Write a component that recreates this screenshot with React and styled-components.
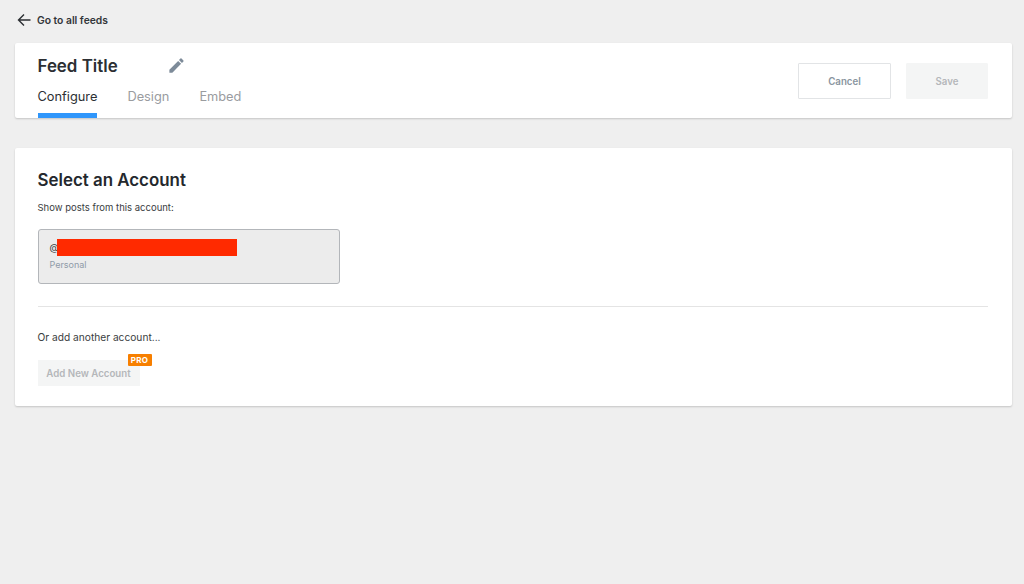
import React from "react";
import styled, { createGlobalStyle } from "styled-components";

const GlobalStyle = createGlobalStyle`
  html, body {
    margin: 0;
    padding: 0;
    background: #efefef;
    font-family: Inter, "Liberation Sans", sans-serif;
    color: #2c2f33;
  }
  * {
    box-sizing: border-box;
  }
`;

const Page = styled.div`
  width: 1024px;
  height: 584px;
  overflow: hidden;
  padding: 0 12px 0 15px;
`;

const BackLink = styled.a`
  display: flex;
  align-items: center;
  gap: 6px;
  height: 43px;
  padding: 0 0 3px 2px;
  font-size: 10.3px;
  font-weight: 600;
  color: #33363a;
  svg {
    display: block;
  }
`;

const Card = styled.section`
  background: #fff;
  border-radius: 2px;
  box-shadow: 0 1px 2px rgba(0, 0, 0, 0.18);
`;

const HeaderCard = styled(Card)`
  display: flex;
  justify-content: space-between;
  height: 75px;
  padding: 0 24px 0 22.5px;
`;

const TitleRow = styled.div`
  display: flex;
  align-items: center;
  height: 46px;
  svg {
    margin-top: -2px;
  }
`;

const FeedTitle = styled.h1`
  width: 129px;
  margin: 0;
  font-size: 16.9px;
  font-weight: 600;
  color: #2c2f33;
`;

const Tabs = styled.nav`
  display: flex;
  gap: 30px;
`;

const Tab = styled.a`
  height: 29px;
  font-size: 12.8px;
  line-height: 16px;
  color: ${(p) => (p.$active ? "#2c2f33" : "#9a9c9f")};
  border-bottom: 5px solid ${(p) => (p.$active ? "#2f96fb" : "transparent")};
`;

const Actions = styled.div`
  display: flex;
  gap: 15px;
  padding-top: 20px;
`;

const Button = styled.button`
  height: 36px;
  width: ${(p) => p.$width}px;
  padding: 0;
  font-family: inherit;
  font-size: 9.7px;
  font-weight: 600;
  border-radius: 1px;
  background: ${(p) => (p.$ghost ? "#fff" : "#f4f5f5")};
  border: 1px solid ${(p) => (p.$ghost ? "#e2e4e6" : "#f4f5f5")};
  color: ${(p) => (p.$ghost ? "#8a95a0" : "#b4b7ba")};
`;

const AccountCard = styled(Card)`
  height: 257.5px;
  margin-top: 30px;
  padding: 20.5px 24px 0 22.5px;
`;

const Heading = styled.h2`
  margin: 0;
  font-size: 16.9px;
  line-height: 22px;
  font-weight: 600;
  color: #24282d;
`;

const Hint = styled.p`
  margin: 11px 0 0;
  font-size: 9.5px;
  line-height: 12px;
  color: #3a3d41;
`;

const AccountBox = styled.div`
  width: 302px;
  height: 55px;
  margin-top: 15.5px;
  padding: 9px 11px 0;
  background: #ececec;
  border: 1px solid #b3b6ba;
  border-radius: 3px;
`;

const Handle = styled.div`
  display: flex;
  align-items: center;
  height: 17px;
  font-size: 9.5px;
  color: #3a3d41;
`;

const Redaction = styled.span`
  width: 180px;
  height: 17px;
  margin-left: -1.5px;
  background: #ff2a00;
`;

const AccountType = styled.div`
  margin-top: 3px;
  font-size: 9px;
  line-height: 12px;
  color: #8f9ba8;
`;

const Divider = styled.hr`
  height: 1px;
  margin: 22px 0 0;
  border: 0;
  background: #e4e4e4;
`;

const AddText = styled.p`
  margin: 23px 0 0;
  font-size: 10.2px;
  line-height: 14px;
  color: #3a3d41;
`;

const AddButton = styled.div`
  position: relative;
  width: 102px;
  height: 26px;
  margin-top: 16px;
  display: flex;
  align-items: center;
  justify-content: center;
  background: #f4f5f5;
  font-size: 9.7px;
  font-weight: 600;
  color: #b4b7ba;
`;

const ProBadge = styled.span`
  position: absolute;
  top: -6px;
  right: -12px;
  width: 24px;
  height: 12px;
  display: flex;
  align-items: center;
  justify-content: center;
  background: #f77f00;
  border-radius: 1px;
  font-size: 8px;
  font-weight: 700;
  letter-spacing: 0.3px;
  color: #fff;
`;

function ArrowLeft() {
  return (
    <svg width="14" height="14" viewBox="0 0 14 14" fill="none" stroke="#2c2f33" strokeWidth="1.4">
      <path d="M13.5 7H1.5M7 1.5L1.5 7L7 12.5" />
    </svg>
  );
}

function Pencil() {
  return (
    <svg width="19" height="19" viewBox="0 0 24 24" fill="#7d8b99">
      <path d="M3 17.25V21h3.75L17.81 9.94l-3.75-3.75L3 17.25zM20.71 7.04a1 1 0 0 0 0-1.41l-2.34-2.34a1 1 0 0 0-1.41 0l-1.83 1.83 3.75 3.75 1.83-1.83z" />
    </svg>
  );
}

export default function App() {
  return (
    <Page>
      <GlobalStyle />
      <BackLink>
        <ArrowLeft />
        Go to all feeds
      </BackLink>
      <HeaderCard>
        <div>
          <TitleRow>
            <FeedTitle>Feed Title</FeedTitle>
            <Pencil />
          </TitleRow>
          <Tabs>
            <Tab $active>Configure</Tab>
            <Tab>Design</Tab>
            <Tab>Embed</Tab>
          </Tabs>
        </div>
        <Actions>
          <Button $ghost $width={93}>Cancel</Button>
          <Button $width={82}>Save</Button>
        </Actions>
      </HeaderCard>
      <AccountCard>
        <Heading>Select an Account</Heading>
        <Hint>Show posts from this account:</Hint>
        <AccountBox>
          <Handle>
            @
            <Redaction />
          </Handle>
          <AccountType>Personal</AccountType>
        </AccountBox>
        <Divider />
        <AddText>Or add another account...</AddText>
        <AddButton>
          Add New Account
          <ProBadge>PRO</ProBadge>
        </AddButton>
      </AccountCard>
    </Page>
  );
}
